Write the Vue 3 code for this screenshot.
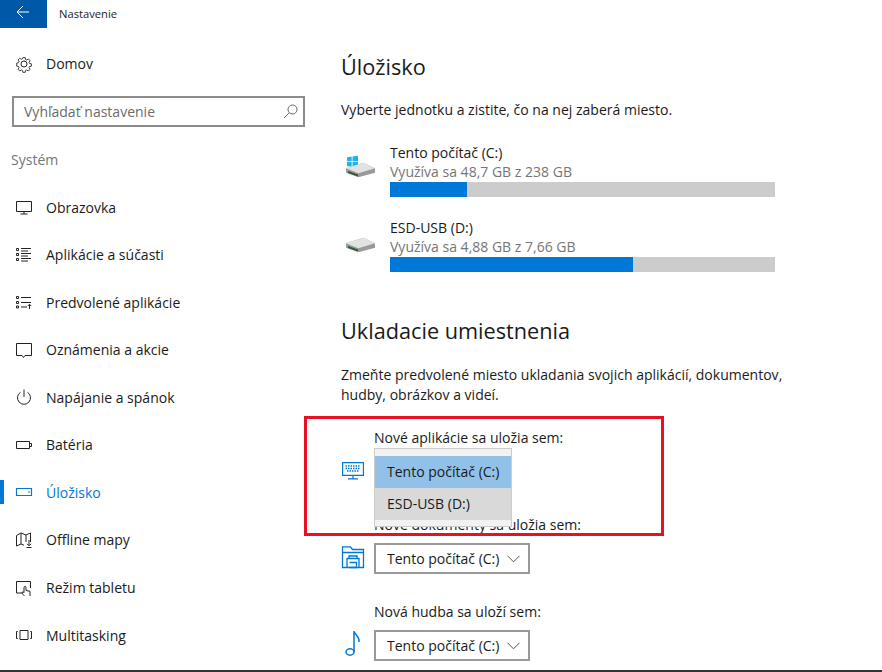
<script setup>
const nav = [
  { id: 'display', label: 'Obrazovka' },
  { id: 'apps', label: 'Aplikácie a súčasti' },
  { id: 'defaults', label: 'Predvolené aplikácie' },
  { id: 'notify', label: 'Oznámenia a akcie' },
  { id: 'power', label: 'Napájanie a spánok' },
  { id: 'battery', label: 'Batéria' },
  { id: 'storage', label: 'Úložisko', active: true },
  { id: 'maps', label: 'Offline mapy' },
  { id: 'tablet', label: 'Režim tabletu' },
  { id: 'multi', label: 'Multitasking' },
]
const drives = [
  { name: 'Tento počítač (C:)', used: 'Využíva sa 48,7 GB z 238 GB', pct: 20, win: true },
  { name: 'ESD-USB (D:)', used: 'Využíva sa 4,88 GB z 7,66 GB', pct: 63.1, win: false },
]
</script>

<template>
  <div class="page">
    <header class="top">
      <div class="back">
        <svg width="14" height="14" viewBox="0 0 14 14" fill="none" stroke="#fff" stroke-width="1"><path d="M13 7H1.500M7 1 1 7l6 6" /></svg>
      </div>
      <span class="app-title">Nastavenie</span>
    </header>
    <div class="body">
      <aside class="side">
        <div class="nav-item home">
          <span class="ico">
            <svg width="18" height="18" viewBox="0 0 18 18" fill="none" stroke="#222" stroke-width="1"><path d="M7.600 1.500h2.800l.4 2.200 1.300.6 1.900-1.200 2 2-1.200 1.900.6 1.300 2.100.4v2.800l-2.100.4-.6 1.300 1.200 1.900-2 2-1.900-1.200-1.300.6-.4 2.100H7.600l-.4-2.100-1.300-.6-1.900 1.200-2-2 1.200-1.900-.6-1.300-2.100-.4V7.900l2.100-.4.6-1.300-1.200-1.900 2-2 1.900 1.200 1.300-.6z" transform="translate(1.300 1.300) scale(.86)" /><circle cx="9" cy="9" r="3" /></svg>
          </span>
          <span>Domov</span>
        </div>
        <div class="search">
          <span>Vyhľadať nastavenie</span>
          <svg width="15" height="15" viewBox="0 0 15 15" fill="none" stroke="#666" stroke-width="1"><circle cx="9.500" cy="5.500" r="4.500" /><path d="M6.300 8.700 1 14" /></svg>
        </div>
        <div class="section">Systém</div>
        <div v-for="n in nav" :key="n.id" class="nav-item" :class="{ active: n.active }">
          <span v-if="n.active" class="marker"></span>
          <span class="ico">
            <svg width="18" height="18" viewBox="0 0 18 18" fill="none" :stroke="n.active ? '#0078d7' : '#222'" stroke-width="1">
              <template v-if="n.id === 'display'"><path d="M1.500 3.500h15v10h-15zM9 13.500v2.500M5.500 16h7" /></template>
              <template v-else-if="n.id === 'apps'"><path d="M1.500 2.500h2v2h-2zM1.500 7.500h2v2h-2zM1.500 12.500h2v2h-2zM6 2.500h10M6 5h7M6 7.500h10M6 10h7M6 12.500h10M6 15h7" /></template>
              <template v-else-if="n.id === 'defaults'"><path d="M1.500 3.500h2v2h-2zM1.500 8.500h2v2h-2zM1.500 13h2v2h-2zM6 4.500h10M6 9.500h10M6 14h6M14.500 16v-4.500M12.800 13l1.700-1.700 1.700 1.700" /></template>
              <template v-else-if="n.id === 'notify'"><path d="M1.500 2.500h15v12H10l-1.500 2-1.500-2H1.500z" /></template>
              <template v-else-if="n.id === 'power'"><path d="M9 1.500v7.500M5.500 4.300a6.500 6.500 0 1 0 7 0" /></template>
              <template v-else-if="n.id === 'battery'"><path d="M1.500 5.500h13v7h-13zM14.500 7.500h2v3h-2z" /></template>
              <template v-else-if="n.id === 'storage'"><path d="M1.500 5.500h15v7h-15z" stroke-width="1.200" /><path d="M13 9h2" /></template>
              <template v-else-if="n.id === 'maps'"><path d="M1.500 4.500 6 2l5 2 4.500-2v9M1.500 4.500V15L6 13l3 1.200M6 2v11M11 4v7M14 9v5.500M12 12.800l2 2 2-2M11.500 16.500h5" /></template>
              <template v-else-if="n.id === 'tablet'"><path d="M8 14H1.500V2.500h14V9" /><path d="M9.500 17c-1-1-2.500-2.500-2.500-3.500.5-.8 1.500-.5 2 .2V8.500a1 1 0 0 1 2 0v3l4 .8V17" /></template>
              <template v-else-if="n.id === 'multi'"><path d="M5 4.500h8v9H5zM2.800 5.500H1.500v7h1.300M15.200 5.500h1.300v7h-1.300" /></template>
            </svg>
          </span>
          <span>{{ n.label }}</span>
        </div>
      </aside>

      <main class="main">
        <h1 class="h first">Úložisko</h1>
        <p class="txt intro">Vyberte jednotku a zistite, čo na nej zaberá miesto.</p>
        <div class="drives">
          <div v-for="d in drives" :key="d.name" class="drive">
            <div class="drive-ico">
              <svg width="32" height="32" viewBox="0 0 32 32">
                <g v-if="d.win" fill="#1eb4ea">
                  <path d="M2 4.300 6.700 3.600v4.700H2zM7.500 3.500 13 2.700v5.600H7.500zM2 9.100h4.700v4.700L2 13.100zM7.500 9.100H13v5.600l-5.500-.8z" />
                </g>
                <path d="M1 19.700v-4.400L18.300 9.700 30 15.300v4.400L13.300 24.300z" fill="#9a9a9a" />
                <path d="M1 15.300 18.300 9.700 30 15.300 13.300 20.300z" fill="#e2e2e2" />
                <path d="M3 18 13 21.500v2L3 20z" fill="#2f5a32" />
              </svg>
            </div>
            <div class="drive-info">
              <div class="drive-name">{{ d.name }}</div>
              <div class="drive-used">{{ d.used }}</div>
              <div class="bar"><div class="fill" :style="{ width: d.pct + '%' }"></div></div>
            </div>
          </div>
        </div>
        <h1 class="h second">Ukladacie umiestnenia</h1>
        <p class="txt para">Zmeňte predvolené miesto ukladania svojich aplikácií, dokumentov, hudby, obrázkov a videí.</p>

        <div class="locs">
          <div class="loc">
            <div class="loc-ico">
              <svg width="24" height="24" viewBox="0 0 24 24" fill="none" stroke="#0078d7" stroke-width="1.200">
                <path d="M1.600 4.600h20.800v12.800H1.600zM12 17.400v3M7 20.900h10" />
                <path d="M4.500 8h15M4.500 10.500h15M6 13h12" stroke-dasharray="1.500 1" stroke-width="1.500" />
              </svg>
            </div>
            <div class="loc-col">
              <div class="loc-label">Nové aplikácie sa uložia sem:</div>
              <div class="slot">
                <div class="popup">
                  <div class="opt sel">Tento počítač (C:)</div>
                  <div class="opt alt">ESD-USB (D:)</div>
                </div>
              </div>
            </div>
          </div>
          <div class="loc">
            <div class="loc-ico">
              <svg width="24" height="24" viewBox="0 0 24 24" fill="none" stroke="#0078d7" stroke-width="1.300">
                <path d="M1.500 5.500V1.800h8l2 2.700h11v3M1.500 5.500v17h21V7.500h-21" />
                <path d="M6 22.500v-9h12v9M8 13.500V11h8v2.500M8.500 17.500h7v5h-7" />
              </svg>
            </div>
            <div class="loc-col">
              <div class="loc-label">Nové dokumenty sa uložia sem:</div>
              <div class="select"><span>Tento počítač (C:)</span>
                <svg width="13" height="8" viewBox="0 0 13 8" fill="none" stroke="#555"><path d="M.5.800 6.500 6.800l6-6" /></svg>
              </div>
            </div>
          </div>
          <div class="loc">
            <div class="loc-ico note">
              <svg width="24" height="28" viewBox="0 0 24 28" fill="none" stroke="#0078d7" stroke-width="1.500">
                <ellipse cx="8" cy="23" rx="4" ry="3.200" />
                <path d="M12 23V2c.5 4 6 5 5 11" />
              </svg>
            </div>
            <div class="loc-col">
              <div class="loc-label">Nová hudba sa uloží sem:</div>
              <div class="select"><span>Tento počítač (C:)</span>
                <svg width="13" height="8" viewBox="0 0 13 8" fill="none" stroke="#555"><path d="M.5.800 6.500 6.800l6-6" /></svg>
              </div>
            </div>
          </div>
        </div>
      </main>
    </div>
    <div class="redbox"></div>
    <div class="bottom"></div>
  </div>
</template>

<style>
html, body { margin: 0; background: #fff; overflow: hidden; }
</style>

<style scoped>
.page {
  position: relative;
  width: 882px;
  height: 672px;
  overflow: hidden;
  background: #fff;
  color: #1a1a1a;
  font-family: "Open Sans", "Noto Sans", sans-serif;
  font-size: 14.030px;
}
.top { display: flex; align-items: center; height: 28px; }
.back {
  width: 47px;
  height: 28px;
  background: #0058a8;
  display: flex;
  align-items: center;
  justify-content: center;
}
.back svg { margin-right: 1px; margin-top: -4px; }
.app-title { margin-left: 12px; font-size: 11.200px; margin-top: -2px; color: #222; }
.body { display: flex; }
.side { width: 341px; flex: none; }
.nav-item {
  position: relative;
  display: flex;
  align-items: center;
  height: 47.550px;
  padding-left: 15px;
}
.nav-item .ico { width: 31px; display: flex; align-items: center; height: 18px; }
.home { margin-top: 12px; height: 47px; }
.search {
  margin: 9px 0 0 12px;
  width: 293px;
  height: 31px;
  box-sizing: border-box;
  border: 2px solid #8c8c8c;
  display: flex;
  align-items: center;
  justify-content: space-between;
  padding: 0 5px 0 10px;
  color: #6b6b6b;
}
.section { margin: 21px 0 12.400px 11px; height: 23px; color: #767676; display: flex; align-items: center; }
.active { color: #0078d7; }
.marker { position: absolute; left: 0; top: 11px; width: 4px; height: 24px; background: #0078d7; }
.main { flex: 1; padding-right: 80px; }
.h { margin: 0; font-weight: 400; font-size: 21.700px; line-height: 30px; color: #1a1a1a; }
.first { margin-top: 24px; }
.txt { margin: 0; line-height: 20px; }
.intro { margin-top: 18px; }
.drives { margin-top: 17px; }
.drive { display: flex; height: 75px; }
.drive-ico { width: 49px; padding: 16px 0 0 4px; box-sizing: border-box; }
.drive-ico svg { display: block; }
.drive-info { width: 385px; }
.drive-name { line-height: 20px; margin-top: 6px; }
.drive-used { line-height: 18px; color: #767676; }
.bar { height: 15px; background: #ccc; margin-top: 1px; }
.fill { height: 100%; background: #0078d7; }
.second { margin-top: 29px; }
.para { margin-top: 19px; width: 455px; }
.locs { margin-top: 23px; }
.loc { display: flex; height: 87px; }
.loc-ico { width: 33px; padding-top: 30px; box-sizing: border-box; }
.loc-ico.note { padding-top: 27px; padding-left: 1px; width: 33px; }
.loc-col { width: 200px; }
.loc-label { line-height: 20px; margin-bottom: 8px; white-space: nowrap; }
.slot { position: relative; height: 31px; }
.select {
  width: 156px;
  height: 31px;
  box-sizing: border-box;
  border: 2px solid #999;
  display: flex;
  align-items: center;
  justify-content: space-between;
  padding: 0 8px 0 11px;
}
.popup {
  position: absolute;
  left: 0;
  top: -8px;
  width: 138px;
  height: 79px;
  box-sizing: border-box;
  border: 1px solid #ccc;
  background: #f2f2f2;
  padding-top: 7px;
}
.opt { height: 32px; line-height: 32px; padding-left: 12px; }
.sel { background: #91c1e8; }
.alt { background: #d9d9d9; }
.redbox {
  position: absolute;
  left: 304px;
  top: 416px;
  width: 360px;
  height: 120px;
  box-sizing: border-box;
  border: 3px solid #e81123;
}
.bottom { position: absolute; left: 0; right: 0; bottom: 0; height: 2px; background: #333; }
</style>
